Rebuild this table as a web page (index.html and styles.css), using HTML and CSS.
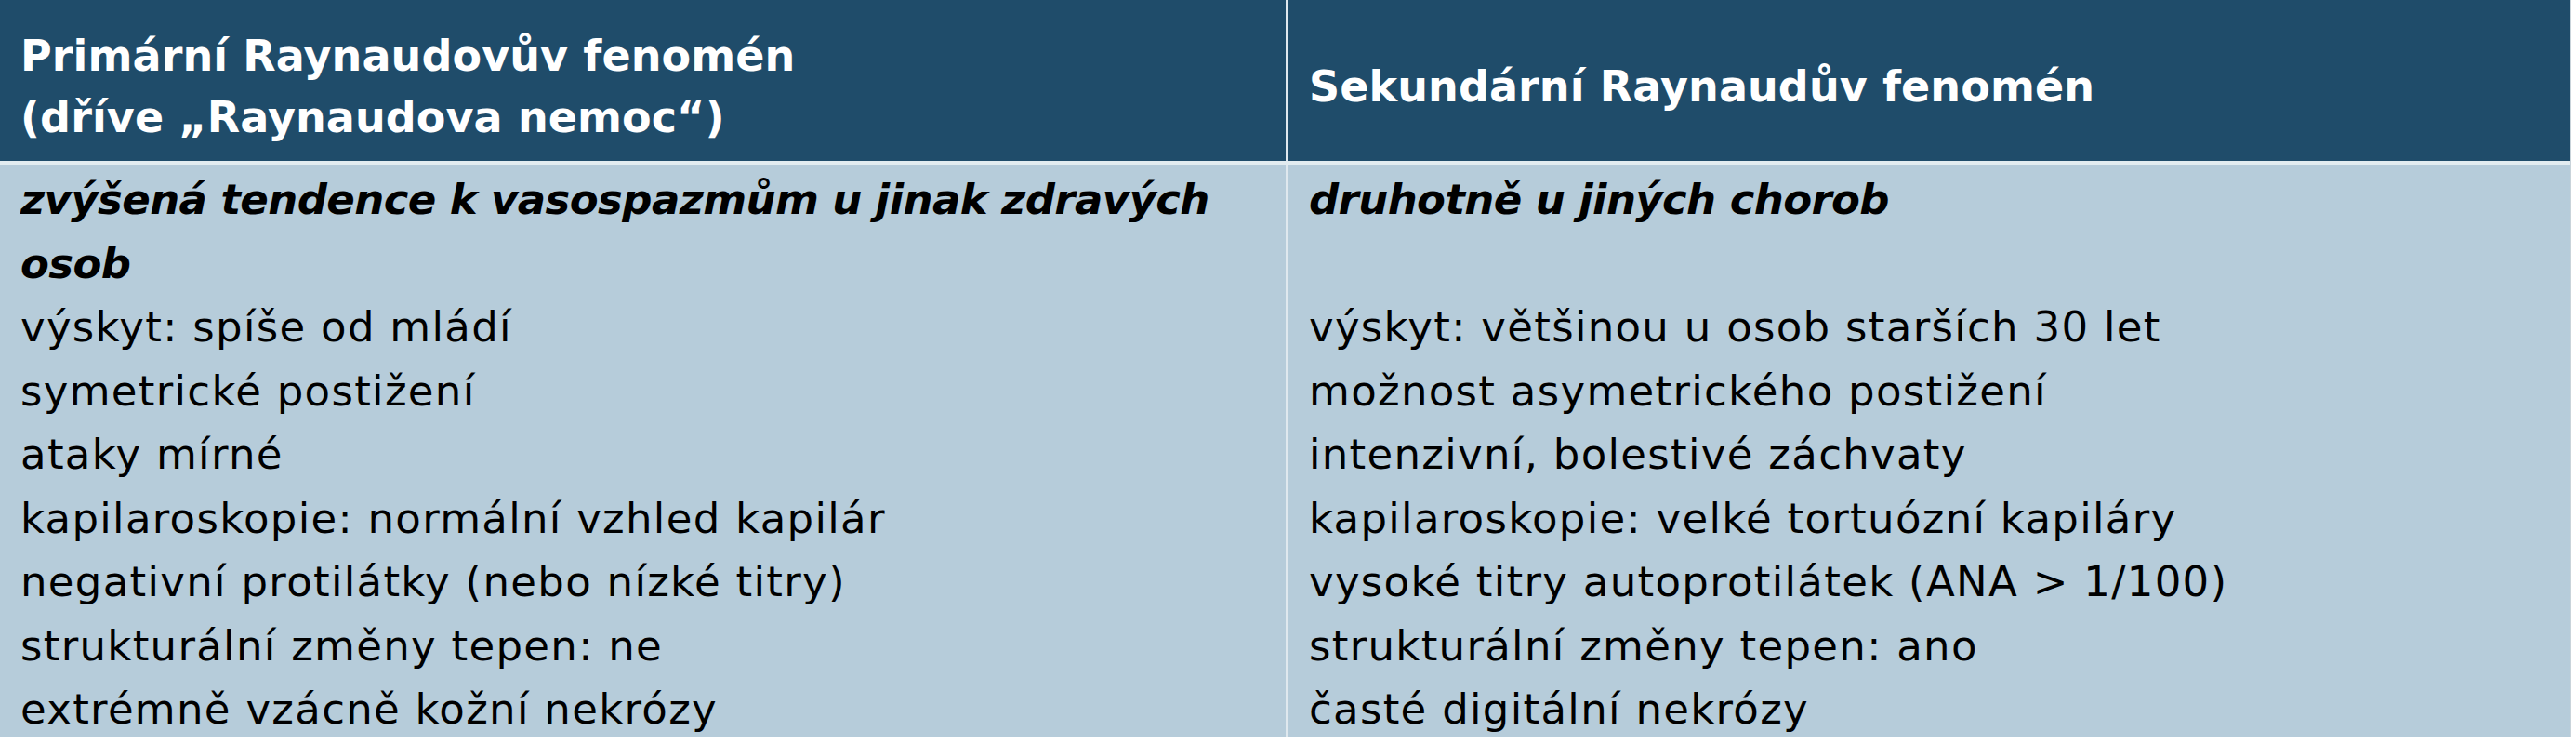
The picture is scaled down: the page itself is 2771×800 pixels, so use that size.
FILE: index.html
```html
<!DOCTYPE html>
<html lang="cs">
<head>
<meta charset="utf-8">
<title>Raynaudův fenomén</title>
<link rel="stylesheet" href="styles.css">
</head>
<body>
<div class="table">
  <div class="head head-left">
    <div class="head-text">Primární Raynaudovův fenomén<br>(dříve „Raynaudova nemoc“)</div>
  </div>
  <div class="head head-right">
    <div class="head-text">Sekundární Raynaudův fenomén</div>
  </div>
  <div class="cell cell-left">
    <p class="lead">zvýšená tendence k vasospazmům u jinak zdravých<br>osob</p>
    <p>výskyt: spíše od mládí</p>
    <p>symetrické postižení</p>
    <p>ataky mírné</p>
    <p>kapilaroskopie: normální vzhled kapilár</p>
    <p>negativní protilátky (nebo nízké titry)</p>
    <p>strukturální změny tepen: ne</p>
    <p>extrémně vzácně kožní nekrózy</p>
  </div>
  <div class="cell cell-right">
    <p class="lead">druhotně u jiných chorob</p>
    <p class="blank">&nbsp;</p>
    <p>výskyt: většinou u osob starších 30 let</p>
    <p>možnost asymetrického postižení</p>
    <p>intenzivní, bolestivé záchvaty</p>
    <p>kapilaroskopie: velké tortuózní kapiláry</p>
    <p>vysoké titry autoprotilátek (ANA &gt; 1/100)</p>
    <p>strukturální změny tepen: ano</p>
    <p>časté digitální nekrózy</p>
  </div>
</div>
</body>
</html>
```
FILE: styles.css
```css
html, body {
  margin: 0;
  padding: 0;
  background: #ffffff;
}

body {
  font-family: "DejaVu Sans", "Liberation Sans", sans-serif;
  width: 2771px;
  height: 800px;
  overflow: hidden;
}

.table {
  display: grid;
  grid-template-columns: 1383px 1382px;
  grid-template-rows: 173px 4px 615px;
  width: 2765px;
  background: #e2ecf0;
  border-right: 1px solid #c9d3da;
}

.head {
  grid-row: 1;
  background: #1f4c6a;
  color: #ffffff;
  display: flex;
  align-items: center;
  box-sizing: border-box;
  padding: 12px 0 0 22px;
}

.head-right {
  border-left: 2px solid #dfe8ee;
  padding-left: 23px;
}

.head-text {
  font-weight: bold;
  font-size: 46px;
  line-height: 66px;
  letter-spacing: 0.1px;
}

.cell {
  grid-row: 3;
  background: #b6ccda;
  color: #000000;
  box-sizing: border-box;
  padding: 4px 0 0 22px;
  overflow: visible;
}

.cell-left {
  grid-column: 1;
}

.cell-right {
  grid-column: 2;
  border-left: 2px solid #dfe8ee;
  padding-left: 23px;
}

.cell p {
  margin: 0;
  font-size: 45px;
  line-height: 68.5px;
  letter-spacing: 1.3px;
  white-space: nowrap;
}

.cell p.lead {
  font-weight: bold;
  font-style: italic;
  letter-spacing: -0.6px;
}
```
